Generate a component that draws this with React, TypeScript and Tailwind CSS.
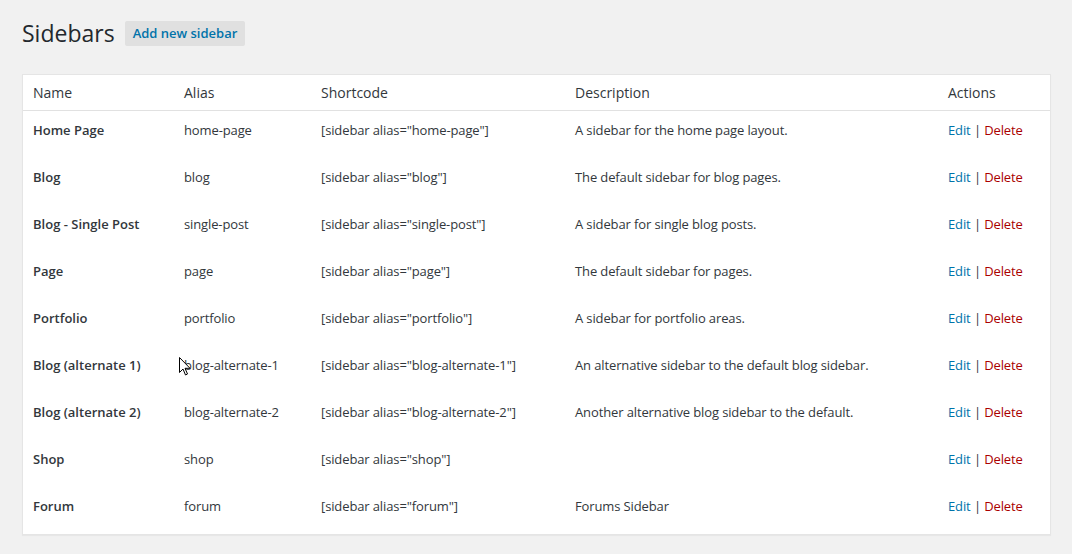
import React from "react";

const rows = [
  { name: "Home Page", alias: "home-page", desc: "A sidebar for the home page layout." },
  { name: "Blog", alias: "blog", desc: "The default sidebar for blog pages." },
  { name: "Blog - Single Post", alias: "single-post", desc: "A sidebar for single blog posts." },
  { name: "Page", alias: "page", desc: "The default sidebar for pages." },
  { name: "Portfolio", alias: "portfolio", desc: "A sidebar for portfolio areas." },
  { name: "Blog (alternate 1)", alias: "blog-alternate-1", desc: "An alternative sidebar to the default blog sidebar." },
  { name: "Blog (alternate 2)", alias: "blog-alternate-2", desc: "Another alternative blog sidebar to the default." },
  { name: "Shop", alias: "shop", desc: "" },
  { name: "Forum", alias: "forum", desc: "Forums Sidebar" },
];

export default function App() {
  return (
    <div
      className="relative w-[1072px] h-[554px] bg-[#f1f1f1] pl-[22px] pr-[21px] pt-[19px] text-[#32373c]"
      style={{ fontFamily: '"Open Sans", "Liberation Sans", sans-serif' }}
    >
      <div className="flex items-center h-[29px]">
        <h1 className="text-[23px] leading-[29px] font-normal text-[#23282d]">Sidebars</h1>
        <button className="ml-[10px] h-[25px] px-[8px] bg-[#e0e0e0] rounded-[2px] text-[13px] leading-[25px] font-semibold text-[#0073aa]">
          Add new sidebar
        </button>
      </div>
      <div className="mt-[26px] bg-white border border-[#e5e5e5] shadow-[0_1px_1px_rgba(0,0,0,0.04)]">
        <table className="w-full border-collapse table-fixed">
          <colgroup>
            <col className="w-[151px]" />
            <col className="w-[137px]" />
            <col className="w-[254px]" />
            <col className="w-[373px]" />
            <col />
          </colgroup>
          <thead>
            <tr className="h-[35px] border-b border-[#e1e1e1]">
              {["Name", "Alias", "Shortcode", "Description", "Actions"].map((h) => (
                <th key={h} className="px-[10px] text-left text-[14px] font-normal text-[#32373c] align-middle">
                  {h}
                </th>
              ))}
            </tr>
          </thead>
          <tbody>
            {rows.map((r) => (
              <tr key={r.alias} className="h-[47px] text-[13px] leading-[20px]">
                <td className="px-[10px] pt-[9px] pb-[18px] align-top font-semibold">{r.name}</td>
                <td className="px-[10px] pt-[9px] pb-[18px] align-top tracking-[-0.12px]">{r.alias}</td>
                <td className="px-[10px] pt-[9px] pb-[18px] align-top tracking-[-0.12px]">[sidebar alias="{r.alias}"]</td>
                <td className="px-[10px] pt-[9px] pb-[18px] align-top tracking-[-0.12px]">{r.desc}</td>
                <td className="px-[10px] pt-[9px] pb-[18px] align-top whitespace-nowrap tracking-[-0.12px]">
                  <span className="text-[#0073aa]">Edit</span>
                  <span> | </span>
                  <span className="text-[#a00]">Delete</span>
                </td>
              </tr>
            ))}
          </tbody>
        </table>
      </div>
      <svg className="absolute left-[179px] top-[357px]" width="12" height="19" viewBox="0 0 12 19">
        <path d="M0.5 0.5 L0.5 15.5 L4 12 L6.5 18 L8.5 17 L6 11.3 L11 11.3 Z" fill="#fff" stroke="#000" strokeWidth="1" strokeLinejoin="round" />
      </svg>
    </div>
  );
}
